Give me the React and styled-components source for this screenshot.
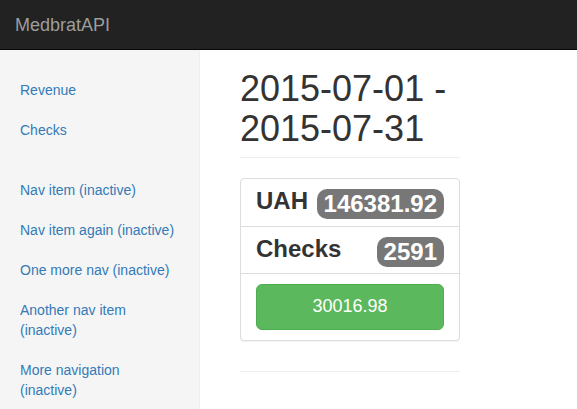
import React from 'react'
import styled, { createGlobalStyle } from 'styled-components';

const GlobalStyle = createGlobalStyle`
  * { box-sizing: border-box; }
  html, body { margin: 0; padding: 0; }
  body {
    font-family: "Liberation Sans", Arial, Helvetica, sans-serif;
    font-size: 14px;
    line-height: 1.42857;
    color: #333;
    background: #fff;
  }
`;

const navLinks = [
  { label: 'Revenue', group: 1 },
  { label: 'Checks', group: 1 },
  { label: 'Nav item (inactive)', group: 2 },
  { label: 'Nav item again (inactive)', group: 2 },
  { label: 'One more nav (inactive)', group: 2 },
  { label: 'Another nav item (inactive)', group: 2 },
  { label: 'More navigation (inactive)', group: 2 },
];

const App = () => {
  const groups = [1, 2].map((g) => navLinks.filter((l) => l.group === g));

  return (
    <Wrapper>
      <GlobalStyle />
      <Navbar>
        <Brand href="#">MedbratAPI</Brand>
      </Navbar>
      <Body>
        <Sidebar>
          {groups.map((items, i) => (
            <NavList key={i}>
              {items.map((item) => (
                <li key={item.label}>
                  <NavLink href="#">{item.label}</NavLink>
                </li>
              ))}
            </NavList>
          ))}
        </Sidebar>
        <Main>
          <PageHeader>
            <h1>2015-07-01 - 2015-07-31</h1>
          </PageHeader>
          <Panel>
            <Row $h={48}>
              <Label>UAH</Label>
              <Badge>146381.92</Badge>
            </Row>
            <Row $h={47}>
              <Label>Checks</Label>
              <Badge>2591</Badge>
            </Row>
            <ButtonRow>
              <SuccessButton>30016.98</SuccessButton>
            </ButtonRow>
          </Panel>
          <Divider />
        </Main>
      </Body>
    </Wrapper>
  )
}

const Wrapper = styled.div`
  height: 100vh;
  overflow: hidden;
  display: flex;
  flex-direction: column;
`;

const Navbar = styled.nav`
  height: 50px;
  background: #222;
  border-bottom: 1px solid #080808;
  display: flex;
  align-items: center;
  flex-shrink: 0;
`;

const Brand = styled.a`
  padding: 15px;
  font-size: 18px;
  line-height: 20px;
  color: #9d9d9d;
  text-decoration: none;
`;

const Body = styled.div`
  flex: 1;
  display: flex;
`;

const Sidebar = styled.aside`
  width: 200px;
  flex-shrink: 0;
  padding-top: 20px;
  background: #f5f5f5;
  border-right: 1px solid #eee;
`;

const NavList = styled.ul`
  list-style: none;
  margin: 0 0 20px;
  padding: 0;
`;

const NavLink = styled.a`
  display: block;
  padding: 10px 20px;
  line-height: 20px;
  color: #337ab7;
  text-decoration: none;
`;

const Main = styled.main`
  padding: 19px 40px 0;
  width: 300px;
`;

const PageHeader = styled.div`
  padding-bottom: 9px;
  margin-bottom: 20px;
  border-bottom: 1px solid #eee;

  h1 {
    margin: 0;
    font-size: 36px;
    font-weight: 500;
    line-height: 1.1;
    color: #333;
  }
`;

const Panel = styled.div`
  border: 1px solid #ddd;
  border-radius: 4px;
  background: #fff;
  box-shadow: 0 1px 1px rgba(0, 0, 0, 0.05);
`;

const Row = styled.div`
  display: flex;
  align-items: center;
  justify-content: space-between;
  height: ${(p) => p.$h}px;
  padding: 0 15px;
  border-bottom: 1px solid #ddd;
`;

const ButtonRow = styled.div`
  padding: 10px 15px;
`;

const Label = styled.span`
  font-size: 24px;
  font-weight: bold;
  line-height: 1.1;
  color: #333;
  margin-top: -2px;
`;

const Badge = styled.span`
  display: inline-block;
  margin-top: 3px;
  padding: 3px 7px;
  font-size: 24px;
  font-weight: bold;
  line-height: 1;
  color: #fff;
  background: #777;
  border-radius: 10px;
  white-space: nowrap;
`;

const SuccessButton = styled.button`
  display: block;
  width: 100%;
  padding: 10px 16px;
  font-family: inherit;
  font-size: 18px;
  line-height: 1.3333;
  color: #fff;
  background: #5cb85c;
  border: 1px solid #4cae4c;
  border-radius: 6px;
  cursor: pointer;
`;

const Divider = styled.hr`
  margin: 30px 0 0;
  border: 0;
  border-top: 1px solid #eee;
`;

export default App;
